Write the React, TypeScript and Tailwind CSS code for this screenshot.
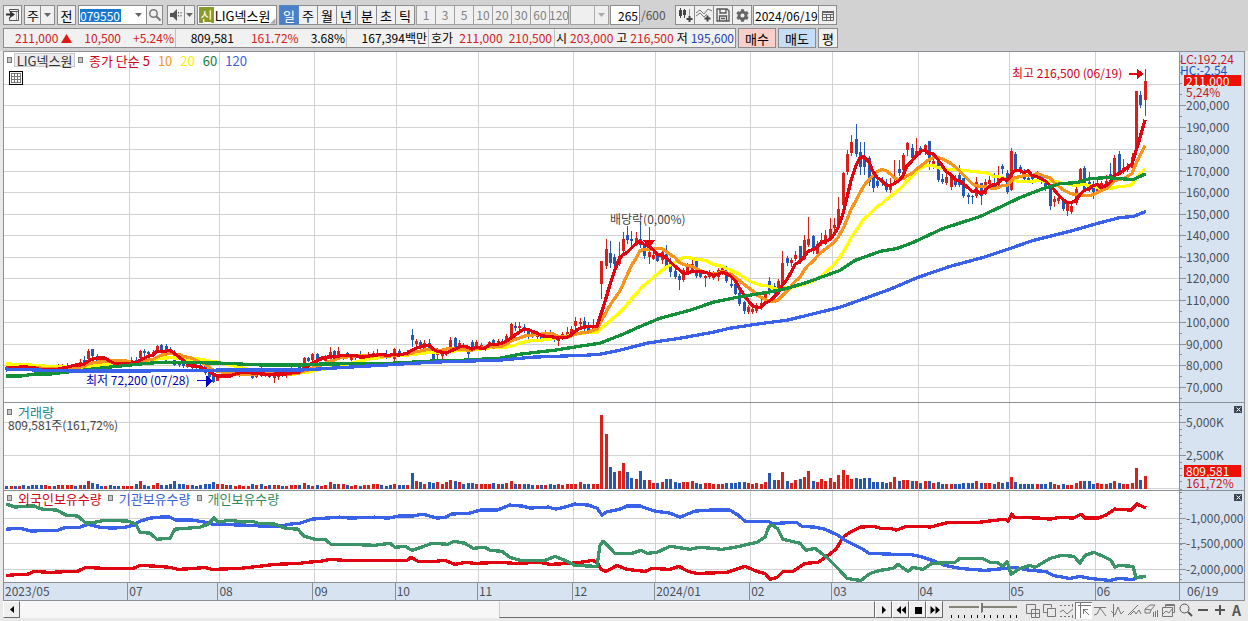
import type { ReactNode } from 'react'
import { FaCog } from 'react-icons/fa'

type Candle = [high: number, top: number, bottom: number, low: number, up: number]
type Point = [number, number]

// Plot space: x 4-1179, price 52-403, volume 404-490, holdings 491-582
const LEFT = 4
const WIDTH = 1175
const UP = '#d9201a'
const DOWN = '#2458b4'

const months = [
  { label: '2023/05', start: 4 },
  { label: '07', start: 129 },
  { label: '08', start: 219 },
  { label: '09', start: 314 },
  { label: '10', start: 396 },
  { label: '11', start: 478 },
  { label: '12', start: 573 },
  { label: '2024/01', start: 655 },
  { label: '02', start: 750 },
  { label: '03', start: 832 },
  { label: '04', start: 918 },
  { label: '05', start: 1009 },
  { label: '06', start: 1095 },
]

const candles: Candle[] = [
  [366, 368, 371, 373, 0], [364, 366, 370, 371, 1], [364, 366, 370, 371, 0], [364, 365, 369, 370, 1],
  [364, 366, 369, 370, 0], [366, 368, 369, 371, 0], [366, 368, 370, 371, 0], [366, 369, 372, 374, 0],
  [369, 370, 373, 374, 0], [369, 371, 372, 374, 1], [368, 369, 372, 373, 1], [368, 369, 370, 372, 0],
  [365, 367, 370, 372, 1], [365, 366, 368, 369, 1], [364, 366, 367, 368, 1], [365, 366, 367, 368, 1],
  [364, 366, 367, 369, 0], [360, 363, 366, 367, 1], [357, 361, 363, 365, 0], [350, 352, 360, 361, 1],
  [350, 350, 357, 359, 0], [355, 357, 362, 363, 0], [357, 361, 363, 364, 0], [360, 362, 365, 366, 1],
  [361, 362, 366, 367, 0], [360, 362, 366, 367, 0], [361, 364, 366, 368, 0], [361, 363, 365, 367, 1],
  [361, 363, 366, 367, 1], [358, 361, 365, 366, 1], [358, 361, 365, 366, 0], [351, 352, 359, 360, 1],
  [350, 352, 354, 358, 0], [352, 353, 355, 357, 0], [351, 353, 356, 357, 1], [346, 347, 352, 353, 1],
  [345, 346, 351, 352, 0], [345, 347, 352, 353, 0], [348, 350, 354, 355, 0], [351, 353, 366, 367, 0],
  [363, 364, 366, 368, 0], [362, 364, 367, 369, 0], [364, 365, 368, 369, 1], [364, 365, 369, 370, 0],
  [364, 366, 369, 371, 0], [365, 366, 371, 372, 0], [366, 367, 374, 376, 0], [369, 371, 378, 379, 0],
  [376, 377, 383, 384, 0], [376, 377, 382, 382, 1], [373, 375, 378, 379, 1], [371, 373, 378, 379, 1],
  [371, 373, 375, 377, 0], [371, 373, 376, 377, 1], [371, 373, 377, 378, 1], [371, 373, 376, 377, 1],
  [371, 373, 375, 376, 1], [371, 372, 379, 380, 0], [372, 374, 378, 379, 1], [368, 370, 375, 378, 0],
  [371, 373, 376, 378, 1], [370, 372, 378, 379, 0], [374, 376, 379, 384, 1], [371, 373, 378, 381, 1],
  [371, 373, 377, 378, 0], [370, 373, 376, 379, 1], [368, 370, 375, 376, 1], [369, 370, 375, 376, 1],
  [366, 368, 373, 375, 0], [358, 359, 367, 368, 1], [358, 359, 362, 363, 0], [354, 355, 361, 362, 1],
  [354, 355, 360, 361, 0], [358, 359, 361, 362, 1], [356, 358, 362, 363, 1], [348, 353, 360, 361, 1],
  [351, 352, 361, 362, 0], [348, 352, 358, 360, 1], [355, 357, 359, 361, 1], [353, 354, 358, 359, 0],
  [356, 358, 361, 362, 1], [356, 357, 359, 361, 1], [352, 356, 358, 360, 0], [355, 357, 359, 361, 1],
  [353, 355, 359, 360, 1], [352, 354, 358, 360, 1], [350, 354, 355, 358, 1], [354, 355, 357, 360, 0],
  [351, 355, 358, 360, 0], [355, 356, 358, 359, 0], [349, 350, 360, 362, 1], [350, 352, 355, 357, 0],
  [353, 354, 356, 357, 0], [351, 353, 356, 357, 1], [330, 336, 341, 348, 0], [340, 342, 345, 349, 1],
  [341, 343, 349, 351, 0], [341, 344, 351, 353, 1], [340, 344, 353, 355, 0], [351, 353, 360, 361, 0],
  [349, 353, 356, 360, 1], [353, 355, 357, 363, 1], [348, 350, 355, 357, 1], [338, 341, 353, 354, 1],
  [338, 339, 352, 354, 0], [341, 344, 350, 351, 1], [344, 347, 349, 351, 0], [351, 353, 355, 360, 0],
  [341, 343, 351, 352, 0], [341, 343, 351, 352, 1], [344, 346, 351, 352, 1], [346, 348, 350, 352, 1],
  [342, 343, 348, 350, 1], [340, 341, 344, 348, 0], [340, 342, 345, 347, 1], [340, 342, 345, 346, 0],
  [335, 337, 343, 344, 1], [324, 325, 337, 339, 1], [323, 327, 329, 332, 0], [323, 327, 329, 333, 1],
  [325, 328, 331, 334, 0], [329, 331, 338, 340, 0], [331, 334, 337, 339, 0], [332, 335, 338, 340, 1],
  [335, 338, 341, 342, 0], [331, 336, 340, 341, 1], [331, 334, 338, 340, 0], [336, 338, 341, 343, 0],
  [339, 341, 342, 347, 1], [333, 335, 340, 341, 1], [328, 333, 336, 338, 1], [327, 330, 334, 336, 1],
  [318, 322, 327, 330, 1], [319, 323, 325, 329, 1], [318, 322, 330, 332, 0], [323, 326, 332, 334, 0],
  [320, 326, 330, 332, 1], [322, 325, 330, 332, 1],
  [262, 262, 285, 300, 1], [240, 250, 267, 270, 1], [242, 254, 264, 269, 0], [255, 258, 265, 276, 0],
  [243, 257, 265, 267, 1], [233, 240, 252, 254, 1], [226, 236, 241, 245, 0], [232, 240, 242, 247, 0],
  [233, 239, 245, 247, 1], [222, 240, 246, 249, 0], [244, 247, 257, 260, 0], [227, 253, 258, 265, 1],
  [251, 256, 260, 261, 1], [253, 256, 262, 263, 0], [250, 253, 261, 265, 1], [246, 255, 267, 268, 0],
  [259, 262, 273, 278, 0], [270, 272, 278, 280, 0], [275, 277, 281, 291, 0], [269, 271, 281, 283, 1],
  [264, 267, 273, 275, 1], [260, 265, 271, 272, 1], [260, 261, 277, 279, 0], [271, 273, 278, 279, 0],
  [276, 277, 279, 288, 1], [271, 273, 278, 280, 1], [272, 275, 279, 281, 1], [269, 271, 278, 282, 1],
  [267, 269, 275, 276, 1], [267, 268, 282, 284, 0], [277, 285, 287, 289, 0], [283, 285, 295, 296, 0],
  [292, 294, 305, 307, 0], [302, 303, 312, 315, 0], [306, 308, 313, 315, 1], [304, 310, 313, 315, 1],
  [304, 306, 312, 314, 1], [299, 304, 308, 311, 1], [292, 294, 303, 305, 1], [278, 282, 294, 296, 0],
  [284, 287, 294, 295, 0], [280, 282, 292, 294, 1], [252, 264, 288, 290, 1], [257, 259, 264, 267, 0],
  [259, 261, 264, 268, 1], [252, 256, 260, 262, 1],
  [247, 247, 263, 265, 0], [236, 241, 260, 261, 1], [217, 240, 246, 248, 1], [236, 237, 250, 255, 0],
  [242, 245, 255, 257, 1], [234, 241, 245, 247, 1], [231, 236, 245, 246, 1], [218, 229, 240, 242, 1],
  [218, 225, 228, 233, 1], [197, 209, 225, 227, 1], [172, 173, 205, 208, 1], [150, 154, 172, 175, 1],
  [135, 142, 153, 156, 1], [124, 139, 154, 157, 0], [142, 152, 167, 175, 0], [142, 157, 167, 175, 0],
  [156, 158, 182, 186, 0], [172, 173, 188, 192, 0], [175, 181, 186, 188, 0], [177, 181, 183, 186, 0],
  [179, 183, 190, 192, 0], [178, 185, 190, 193, 1], [160, 176, 178, 181, 1], [160, 169, 173, 176, 0],
  [153, 155, 170, 172, 1], [142, 143, 150, 156, 1], [144, 148, 158, 160, 0], [138, 151, 156, 158, 1],
  [146, 148, 152, 155, 0], [144, 145, 152, 155, 1], [141, 141, 162, 170, 0], [157, 161, 166, 169, 1],
  [158, 159, 180, 182, 0], [174, 179, 182, 184, 0], [173, 177, 183, 185, 1], [174, 176, 187, 190, 1],
  [175, 178, 185, 187, 0], [165, 175, 185, 187, 0], [178, 178, 196, 198, 0], [193, 195, 197, 204, 0],
  [195, 196, 197, 204, 0], [177, 182, 196, 198, 1],
  [183, 183, 196, 205, 0], [179, 182, 194, 195, 1], [173, 180, 184, 187, 1], [173, 183, 187, 189, 0],
  [166, 176, 185, 187, 1], [164, 166, 169, 174, 0], [170, 173, 192, 194, 0], [148, 151, 190, 191, 1],
  [152, 154, 169, 171, 0], [165, 167, 172, 174, 0], [169, 171, 179, 183, 0], [176, 178, 182, 183, 0],
  [174, 177, 179, 184, 0], [171, 173, 178, 180, 1], [174, 175, 182, 184, 0], [179, 180, 189, 191, 0],
  [187, 188, 206, 210, 0], [196, 199, 202, 207, 1], [194, 198, 201, 204, 1], [199, 200, 209, 211, 0],
  [202, 203, 211, 216, 1], [204, 206, 212, 214, 1], [184, 189, 203, 205, 1], [168, 169, 184, 186, 1],
  [166, 168, 190, 192, 0], [172, 182, 190, 192, 0], [181, 184, 192, 199, 0], [178, 183, 191, 193, 1],
  [181, 183, 188, 191, 1], [175, 181, 187, 189, 1], [163, 174, 177, 182, 0], [155, 158, 177, 178, 1],
  [151, 154, 172, 175, 0], [159, 168, 172, 174, 1], [163, 167, 170, 172, 1], [153, 157, 168, 170, 1],
  [91, 91, 148, 149, 1], [91, 95, 105, 108, 0], [69, 81, 100, 116, 1],
]

const volumes = [
  1, 1, 1, 1, 2, 1, 2, 2, 2, 2, 1, 1, 2, 2, 2, 2, 1, 2, 2, 6, 4, 3, 1, 1, 2, 1, 1, 1, 1, 1, 3, 6,
  2, 1, 2, 4, 2, 2, 3, 6, 3, 3, 2, 2, 1, 2, 3, 3, 5, 3, 3, 2, 2, 1, 2, 1, 1, 3, 2, 3, 1, 2, 2, 2,
  1, 1, 2, 2, 2, 4, 2, 1, 2, 1, 2, 5, 3, 3, 3, 2, 1, 2, 1, 2, 2, 3, 3, 2, 1, 2, 3, 2, 2, 2, 14,
  6, 5, 3, 5, 4, 5, 3, 5, 7, 6, 5, 3, 4, 4, 3, 3, 3, 3, 4, 3, 3, 4, 6, 3, 3, 3, 3, 2, 2, 2, 2, 3,
  2, 3, 2, 3, 3, 3, 5, 3, 3, 3, 3, 72, 53, 20, 15, 16, 24, 15, 9, 8, 16, 7, 7, 4, 4, 5, 8, 8, 5,
  4, 5, 5, 6, 4, 3, 4, 4, 3, 3, 3, 4, 4, 4, 5, 5, 4, 3, 4, 3, 5, 14, 7, 7, 15, 6, 4, 7, 8, 10, 16,
  6, 5, 8, 6, 9, 5, 12, 17, 12, 8, 9, 8, 9, 9, 5, 5, 5, 4, 5, 10, 6, 7, 7, 6, 6, 4, 6, 6, 4, 5, 3,
  3, 3, 3, 3, 4, 4, 4, 6, 4, 4, 4, 3, 5, 4, 5, 10, 5, 3, 3, 3, 3, 3, 3, 3, 5, 3, 2, 3, 2, 2, 4, 6,
  6, 6, 3, 4, 3, 3, 4, 6, 4, 3, 3, 4, 19, 7, 11,
]

const ma60: Point[] = [
  [6, 377], [20, 377], [35, 375], [50, 375], [75, 372], [100, 369], [129, 366], [150, 364], [165, 363],
  [220, 364], [265, 366], [300, 366], [320, 365], [395, 364], [430, 362], [465, 361], [500, 359],
  [520, 355], [555, 351], [580, 347], [600, 344], [623, 335], [643, 326], [660, 319], [690, 311],
  [713, 303], [737, 298], [767, 293], [787, 289], [807, 283], [840, 271], [855, 261], [880, 252],
  [897, 249], [913, 243], [943, 229], [980, 217], [997, 209], [1020, 198], [1043, 189], [1060, 184],
  [1077, 183], [1090, 179], [1107, 178], [1120, 179], [1133, 180], [1146, 174],
]

const ma120: Point[] = [
  [6, 370], [75, 372], [130, 372], [220, 371], [300, 371], [333, 369], [367, 367], [433, 363],
  [467, 362], [500, 361], [533, 358], [587, 356], [600, 355], [620, 351], [647, 344], [680, 339],
  [713, 333], [730, 329], [763, 324], [787, 321], [840, 308], [890, 290], [918, 278], [950, 267],
  [983, 258], [1013, 248], [1033, 241], [1073, 231], [1097, 224], [1120, 218], [1133, 217], [1146, 212],
]

const foreign: Point[] = [
  [6, 575], [20, 574], [27, 574], [34, 571], [50, 572], [70, 571], [77, 571], [86, 567], [105, 568],
  [133, 568], [140, 565], [160, 566], [170, 567], [178, 569], [195, 568], [205, 567], [212, 569],
  [240, 568], [258, 566], [275, 564], [300, 563], [306, 562], [320, 561], [330, 559], [345, 560],
  [395, 560], [407, 560], [411, 557], [418, 561], [435, 561], [445, 560], [455, 564], [465, 562],
  [475, 563], [500, 562], [515, 563], [540, 562], [550, 564], [570, 563], [580, 562], [593, 560],
  [598, 563], [601, 569], [606, 571], [617, 565], [627, 569], [645, 571], [652, 568], [670, 569],
  [679, 566], [688, 571], [697, 573], [727, 572], [745, 566], [757, 571], [765, 573], [770, 579],
  [777, 577], [783, 571], [793, 571], [805, 563], [818, 562], [828, 555], [836, 549], [843, 537],
  [850, 532], [860, 527], [873, 526], [880, 528], [890, 528], [896, 530], [907, 526], [925, 526],
  [930, 527], [945, 523], [952, 522], [980, 522], [1005, 519], [1008, 521], [1012, 514], [1014, 517],
  [1040, 518], [1050, 519], [1060, 517], [1073, 518], [1081, 514], [1085, 518], [1098, 518],
  [1106, 515], [1115, 509], [1131, 510], [1137, 504], [1146, 508],
]

const institution: Point[] = [
  [6, 529], [20, 528], [32, 531], [45, 530], [58, 530], [66, 527], [80, 527], [88, 524], [100, 527],
  [112, 528], [125, 527], [134, 525], [140, 521], [150, 518], [160, 517], [170, 517], [176, 520],
  [193, 520], [205, 522], [213, 524], [245, 525], [265, 526], [280, 526], [290, 524], [300, 523],
  [312, 519], [325, 518], [340, 517], [350, 518], [375, 517], [388, 518], [398, 516], [412, 516],
  [423, 514], [437, 518], [446, 517], [451, 514], [470, 513], [480, 510], [497, 510], [510, 505],
  [522, 506], [530, 508], [548, 507], [556, 509], [565, 507], [575, 504], [588, 505], [597, 508],
  [602, 515], [606, 512], [620, 509], [627, 506], [640, 506], [655, 511], [670, 513], [680, 517],
  [695, 511], [710, 510], [730, 510], [738, 515], [745, 521], [768, 521], [773, 524], [780, 523],
  [796, 522], [802, 526], [815, 527], [825, 529], [838, 535], [845, 540], [857, 546], [863, 549],
  [869, 553], [895, 554], [910, 554], [920, 556], [935, 561], [945, 565], [960, 568], [985, 570],
  [1005, 568], [1015, 567], [1030, 570], [1046, 571], [1053, 575], [1070, 578], [1080, 576],
  [1090, 578], [1110, 580], [1118, 578], [1133, 579], [1137, 577], [1146, 576],
]

const individual: Point[] = [
  [6, 504], [15, 507], [27, 506], [34, 506], [42, 509], [57, 510], [66, 515], [78, 516], [86, 523],
  [95, 522], [105, 520], [128, 521], [136, 524], [140, 532], [150, 533], [157, 539], [170, 538],
  [175, 529], [200, 527], [208, 524], [214, 518], [218, 522], [230, 520], [243, 522], [252, 521],
  [258, 523], [275, 524], [285, 528], [298, 529], [304, 536], [315, 539], [325, 539], [331, 544],
  [345, 544], [375, 545], [390, 543], [395, 547], [405, 546], [412, 550], [424, 546], [432, 543],
  [448, 544], [454, 541], [465, 543], [473, 548], [485, 547], [490, 550], [502, 551], [510, 557],
  [520, 560], [545, 560], [555, 556], [565, 560], [575, 565], [597, 566], [600, 545], [603, 541],
  [615, 553], [632, 553], [641, 550], [647, 553], [657, 552], [670, 546], [690, 549], [700, 547],
  [722, 549], [735, 547], [757, 542], [765, 537], [769, 526], [773, 525], [778, 529], [783, 539],
  [800, 543], [806, 550], [815, 548], [828, 558], [838, 568], [847, 578], [861, 580], [870, 573],
  [880, 570], [893, 568], [898, 564], [908, 571], [913, 567], [923, 569], [932, 563], [955, 562],
  [960, 558], [982, 558], [990, 562], [997, 562], [1003, 566], [1007, 561], [1011, 574], [1020, 568],
  [1030, 565], [1035, 567], [1050, 558], [1062, 555], [1074, 556], [1080, 563], [1085, 555],
  [1094, 552], [1103, 556], [1111, 560], [1115, 567], [1119, 565], [1133, 566], [1136, 577],
  [1146, 576],
]

const priceTicks = [
  { y: 105, label: '200,000' },
  { y: 127, label: '190,000' },
  { y: 149, label: '180,000' },
  { y: 171, label: '170,000' },
  { y: 192, label: '160,000' },
  { y: 214, label: '150,000' },
  { y: 236, label: '140,000' },
  { y: 258, label: '130,000' },
  { y: 279, label: '120,000' },
  { y: 301, label: '110,000' },
  { y: 323, label: '100,000' },
  { y: 345, label: '90,000' },
  { y: 366, label: '80,000' },
  { y: 388, label: '70,000' },
]
const volumeTicks = [
  { y: 423, label: '5,000K' },
  { y: 456, label: '2,500K' },
]
const holdingTicks = [
  { y: 518, label: '-1,000,000' },
  { y: 543, label: '-1,500,000' },
  { y: 569, label: '-2,000,000' },
]

const candleX = (i: number) => Math.round(6.2 + i * 4.312)
const closeOf = (c: Candle) => (c[4] ? c[1] : c[2])

const movingAverage = (span: number, before: number): Point[] =>
  candles.map((_, i) => {
    let sum = 0
    for (let k = i - span + 1; k <= i; k++) sum += k < 0 ? before : closeOf(candles[k])
    return [candleX(i), Math.round(sum / span)]
  })

const Line = ({ points, color }: { points: Point[]; color: string }) => (
  <polyline
    points={points.map((p) => p.join(',')).join(' ')}
    fill="none"
    stroke={color}
    strokeWidth="3.3"
    strokeLinejoin="round"
  />
)

type PlotProps = {
  top: number
  height: number
  rows: number[]
  children: ReactNode
}

const Plot = ({ top, height, rows, children }: PlotProps) => (
  <svg
    className="block h-full w-full"
    viewBox={`${LEFT} ${top} ${WIDTH} ${height}`}
    preserveAspectRatio="none"
    shapeRendering="crispEdges"
  >
    {rows.map((y) => (
      <rect key={y} x={LEFT} y={y} width={WIDTH} height="1" fill="#d2d2d2" />
    ))}
    {months.slice(1).map((m) => (
      <rect key={m.label} x={m.start} y={top} width="1" height={height} fill="#d2d2d2" />
    ))}
    {children}
  </svg>
)

type AxisProps = {
  top: number
  height: number
  ticks: { y: number; label: string }[]
  minor: number
  children?: ReactNode
}

const Axis = ({ top, height, ticks, minor, children }: AxisProps) => {
  const marks: number[] = []
  for (let y = ticks[0].y; y > top; y -= minor) marks.push(y)
  for (let y = ticks[0].y + minor; y < top + height; y += minor) marks.push(y)
  return (
    <div className="relative w-[65px] shrink-0 overflow-hidden border-l border-[#8a8f96] bg-[#d8e3f1]">
      <svg
        className="block h-full w-2"
        viewBox={`0 ${top} 8 ${height}`}
        preserveAspectRatio="none"
        shapeRendering="crispEdges"
      >
        {marks.map((y) => (
          <rect key={y} x="0" y={Math.round(y)} width="2" height="1" fill="#8a8f96" />
        ))}
        {ticks.map((t) => (
          <rect key={t.y} x="0" y={t.y} width="6" height="1" fill="#8a8f96" />
        ))}
      </svg>
      {ticks.map((t) => (
        <span
          key={t.label}
          className="absolute left-[6px] -translate-y-1/2 pb-px text-xs leading-3 text-[#4a5058]"
          style={{ top: `${((t.y - top) / height) * 100}%` }}
        >
          {t.label}
        </span>
      ))}
      {children}
    </div>
  )
}

const Bullet = () => (
  <span className="h-[6px] w-[5px] shrink-0 border border-[#777] bg-[#c8c8c8]" />
)

const ClosePanel = ({ label }: { label: string }) => (
  <button
    aria-label={label}
    className="absolute top-[3px] right-[2px] flex h-[7px] w-2 items-center justify-center bg-[#3c444e]"
  >
    <svg className="h-[5px] w-[5px]" viewBox="0 0 5 5" stroke="#fff" strokeWidth="1">
      <path d="M.5 .5l4 4M4.5 .5l-4 4" />
    </svg>
  </button>
)

const Caret = ({ color = '#666' }: { color?: string }) => (
  <svg className="h-1 w-[7px]" viewBox="0 0 7 4" fill={color}>
    <path d="M0 0h7L3.500 4z" />
  </svg>
)

const toolButton =
  'flex h-5 items-center justify-center border border-[#8c8c8c] bg-[#f0f0f0] text-[13px] leading-none'

const Toolbar = () => (
  <div className="flex h-5 items-center pl-[3px] whitespace-nowrap">
    <button aria-label="창 이동" className={`${toolButton} mr-[2px] w-[19px]`}>
      <svg className="h-[14px] w-[14px]" viewBox="0 0 14 14" fill="none" stroke="#555">
        <path d="M3.500 9v3.500h9v-11h-9v2M4 3.500h9" />
        <path d="M0 6.500h4" strokeWidth="2" stroke="#333" />
        <path d="M4 3l5 3.500-5 3.500z" fill="#333" stroke="none" />
        <path d="M10.500 4v8" stroke="#aaa" />
      </svg>
    </button>
    <label className="relative mr-[2px] flex h-5 w-[31px] items-center border border-[#8c8c8c] bg-[#f0f0f0]">
      <select aria-label="종목 구분" className="h-full w-full appearance-none pl-[2px] text-[13px] leading-none outline-none">
        <option>주</option>
      </select>
      <span className="pointer-events-none absolute inset-y-0 right-0 flex w-[14px] items-center justify-center border-l border-[#8c8c8c]">
        <Caret />
      </span>
    </label>
    <button className={`${toolButton} mr-[2px] w-[19px]`}>전</button>
    <div className="mr-[4px] flex h-5 w-[85px] items-center border border-[#8c8c8c] bg-white">
      <input
        aria-label="종목코드"
        defaultValue="079550"
        className="ml-px h-[13px] w-[41px] bg-[#1878d0] text-xs leading-none text-white outline-none"
      />
      <button aria-label="종목 목록" className="ml-auto flex h-full w-4 items-center justify-center">
        <Caret />
      </button>
      <button aria-label="종목 검색" className="flex h-full w-4 items-center justify-center border-l border-[#8c8c8c] bg-[#f0f0f0]">
        <svg className="h-3 w-3" viewBox="0 0 12 12" fill="none" stroke="#777" strokeWidth="1.500">
          <circle cx="4.500" cy="4.500" r="3.700" />
          <path d="M7.200 7.200L11.500 11.500" strokeWidth="2" />
        </svg>
      </button>
    </div>
    <button aria-label="음성" className={`${toolButton} w-[18px]`}>
      <svg className="h-3 w-[14px]" viewBox="0 0 14 12">
        <path d="M1 4h3l4-4v12l-4-4h-3z" fill="#555" />
        <path d="M9.500 3v6M12 3v6" stroke="#555" strokeDasharray="1.500 1.500" />
      </svg>
    </button>
    <button aria-label="음성 설정" className={`${toolButton} mr-[2px] w-[10px] border-l-0`}>
      <Caret />
    </button>
    <div className="mr-[2px] flex h-5 w-20 items-center border border-[#8c8c8c] bg-white">
      <span className="ml-px flex h-4 w-4 items-center justify-center bg-[#8a9a2a] text-[13px] leading-none text-white">
        신
      </span>
      <span className="ml-px text-[13px] leading-none">LIG넥스원</span>
      <svg className="mt-auto ml-auto h-[6px] w-[6px]" viewBox="0 0 6 6" fill="#aaa">
        <path d="M6 0v6h-6z" />
      </svg>
    </div>
    {['일', '주', '월', '년'].map((t) => (
      <button
        key={t}
        className={
          t === '일'
            ? 'flex h-5 w-5 items-center justify-center border border-[#5a86bf] bg-[#4a7fc9] text-[13px] leading-none text-white'
            : 'flex h-5 w-[19px] items-center justify-center border border-l-0 border-[#8c8c8c] bg-[#f0f0f0] text-[13px] leading-none'
        }
      >
        {t}
      </button>
    ))}
    <div className="mr-px ml-px flex border-l border-[#8c8c8c]">
      {['분', '초', '틱'].map((t) => (
        <button key={t} className={`${toolButton} w-[19px] border-l-0`}>
          {t}
        </button>
      ))}
    </div>
    <div className="flex border-l border-[#a0a0a0]">
      {['1', '3', '5', '10', '20', '30', '60', '120'].map((t) => (
        <button
          key={t}
          className="flex h-5 w-[19px] items-center justify-center border border-l-0 border-[#a0a0a0] bg-[#f0f0f0] text-xs leading-none text-[#808080]"
        >
          {t}
        </button>
      ))}
    </div>
    <label className="relative mr-px ml-px flex h-5 w-[39px] border border-[#a0a0a0] bg-[#efefef]">
      <select aria-label="사용자 주기" disabled className="h-full w-full appearance-none">
        <option></option>
      </select>
      <span className="pointer-events-none absolute inset-y-0 right-0 flex w-[14px] items-center justify-center border-l border-[#b0b0b0]">
        <Caret color="#aaa" />
      </span>
    </label>
    <input
      aria-label="조회 개수"
      defaultValue="265"
      className="h-5 w-[30px] border border-[#8c8c8c] bg-white pr-px text-right text-xs leading-none outline-none"
    />
    <span className="w-[35px] pl-px text-xs leading-none text-[#555]">/600</span>
    <div className="mr-px flex border-l border-[#8c8c8c]">
      <button aria-label="종목 추가" className={`${toolButton} w-[19px] border-l-0`}>
        <svg className="h-4 w-4" viewBox="0 0 16 16" fill="none" stroke="#444">
          <path d="M3.500 1v10M7.500 2v9" />
          <path d="M3.500 3v6M7.500 3v5" strokeWidth="3" />
          <path d="M12.500 2v7" stroke="#999" />
          <path d="M12.500 9v6M9.500 12h6" strokeWidth="2" />
        </svg>
      </button>
      <button aria-label="지표 추가" className={`${toolButton} w-[19px] border-l-0`}>
        <svg className="h-4 w-4" viewBox="0 0 16 16" fill="none" stroke="#777">
          <path d="M0 6l4-3 4 4 4-5 4 2M0 9l4-3 4 4 3-3" />
          <path d="M11.500 8.500v6M8.500 11.500h6" strokeWidth="2" stroke="#444" />
        </svg>
      </button>
      <button aria-label="저장" className={`${toolButton} w-[19px] border-l-0`}>
        <svg className="h-[14px] w-[14px]" viewBox="0 0 14 14" fill="none" stroke="#555" strokeWidth="1.300">
          <path d="M1 1h10l2 2v10h-12z" />
          <path d="M4 1v4h6v-4M3.500 13v-5h7v5M5 10.500h4" />
        </svg>
      </button>
      <button aria-label="설정" className={`${toolButton} w-[19px] border-l-0 text-[#666]`}>
        <FaCog size={13} />
      </button>
    </div>
    <input
      aria-label="기준일"
      defaultValue="2024/06/19"
      className="h-5 w-[66px] border border-[#8c8c8c] bg-white pl-px text-xs leading-none outline-none"
    />
    <button aria-label="달력" className={`${toolButton} w-[18px] border-l-0`}>
      <svg className="h-[11px] w-3" viewBox="0 0 12 11" fill="none" stroke="#666">
        <path d="M.5 1.500h11v9h-11zM.5 4.500h11M.5 7.500h11M4.500 4v6M8.500 4v6" />
        <path d="M0 2h12" strokeWidth="2" />
      </svg>
    </button>
  </div>
)

const QuoteBar = () => (
  <div className="flex h-5 gap-[2px] pl-[3px] text-xs leading-none whitespace-nowrap">
    <div className="flex w-[733px] items-center border border-[#8c8c8c] bg-[#f1f1f1] text-[#d02020]">
      <div className="flex h-full w-[172px] items-center justify-end border-r border-[#c0c0c0] pr-px">
        <span>211,000</span>
        <svg className="mr-3 ml-[3px] h-[9px] w-[11px]" viewBox="0 0 11 9" fill="#e01818">
          <path d="M5.500 0L11 9h-11z" />
        </svg>
        <span className="mr-3">10,500</span>
        <span>+5.24%</span>
      </div>
      <div className="flex h-full w-[171px] items-center justify-end border-r border-[#c0c0c0] pr-px">
        <span className="mr-[17px] text-black">809,581</span>
        <span className="mr-3">161.72%</span>
        <span className="text-black">3.68%</span>
      </div>
      <div className="flex h-full w-[82px] items-center justify-end border-r border-[#c0c0c0] pr-px text-black">
        167,394백만
      </div>
      <div className="flex h-full w-[126px] items-center justify-between border-r border-[#c0c0c0] pr-[2px] pl-[2px]">
        <span className="text-black">호가</span>
        <span>211,000</span>
        <span>210,500</span>
      </div>
      <div className="flex h-full flex-1 items-center justify-between px-px">
        <span className="text-black">시</span>
        <span>203,000</span>
        <span className="text-black">고</span>
        <span>216,500</span>
        <span className="text-black">저</span>
        <span className="text-[#1f3fae]">195,600</span>
      </div>
    </div>
    <button className="w-[38px] border border-[#8c8c8c] bg-[#f8cfcb] text-[13px]">매수</button>
    <button className="w-[38px] border border-[#8c8c8c] bg-[#c5ddf6] text-[13px]">매도</button>
    <button className="w-5 border border-[#8c8c8c] bg-[#f0f0f0] text-[13px]">평</button>
  </div>
)

type NoteProps = { x: number; y: number; className: string; children: ReactNode }

const Note = ({ x, y, className, children }: NoteProps) => (
  <span
    className={`absolute -translate-y-1/2 text-xs leading-none whitespace-nowrap ${className}`}
    style={{ left: `${((x - LEFT) / WIDTH) * 100}%`, top: `${((y - 52) / 351) * 100}%` }}
  >
    {children}
  </span>
)

const PricePanel = () => (
  <section className="flex min-h-0 flex-[352_1_0%] border-b border-[#8a8f96]">
    <div className="relative min-w-0 flex-1">
      <Plot top={52} height={351} rows={[84, ...priceTicks.map((t) => t.y)]}>
        {candles.map(([high, top, bottom, low, up], i) => (
          <g key={i} fill={up ? UP : DOWN}>
            <rect x={candleX(i)} y={high} width="1" height={low - high} />
            <rect x={candleX(i) - 1} y={top} width="3" height={Math.max(1, bottom - top)} />
          </g>
        ))}
        <Line points={movingAverage(20, 365)} color="#ffff00" />
        <Line points={movingAverage(10, 369)} color="#f7941d" />
        <Line points={movingAverage(5, 369)} color="#e00510" />
        <Line points={ma60} color="#15903a" />
        <Line points={ma120} color="#3a62e8" />
        <path d="M643 241h12l-6 8z" fill="#e00510" />
        <path d="M1129 73h8v-4l7 5-7 5v-4h-8z" fill="#e00510" />
        <path d="M197 381h9v-5l7 6-7 6v-6h-9z" fill="#0000d0" />
      </Plot>
      <div className="absolute top-px left-[3px] flex items-center text-[13px] leading-none">
        <Bullet />
        <span className="ml-[2px] flex h-[14px] w-[61px] items-center justify-center border border-[#c8c8c8] bg-[#ececec] text-[#333]">
          LIG넥스원
        </span>
        <span className="w-[3px]" />
        <Bullet />
        <span className="ml-[6px] text-[#d00018]">종가 단순 5</span>
        <span className="ml-2 text-[#f7941d]">10</span>
        <span className="ml-2 text-[#f5f000]">20</span>
        <span className="ml-2 text-[#15803a]">60</span>
        <span className="ml-2 text-[#3a5fd8]">120</span>
      </div>
      <button aria-label="데이터 표" className="absolute top-[19px] left-[5px] flex h-[14px] w-[14px] items-center justify-center border border-black bg-white">
        <svg className="h-[10px] w-[10px]" viewBox="0 0 10 10" fill="none" stroke="#777" shapeRendering="crispEdges">
          <path d="M.5 .5h9v9h-9zM.5 3.500h9M.5 6.500h9M3.500 .5v9M6.500 .5v9" />
        </svg>
      </button>
      <Note x={1012} y={73} className="text-[#d00018]">최고 216,500 (06/19)</Note>
      <Note x={86} y={381} className="text-[#0000b0]">최저 72,200 (07/28)</Note>
      <Note x={610} y={219} className="text-[#444]">배당락(0,00%)</Note>
    </div>
    <Axis top={52} height={351} ticks={priceTicks} minor={10.89}>
      <div className="absolute top-px left-0 w-full text-xs leading-[11px]">
        <p className="text-[#c81820]">LC:192,24</p>
        <p className="text-[#2050c0]">HC:-2,54</p>
        <p className="ml-[4px] w-[57px] bg-[#ee1000] pl-[2px] text-white">211,000</p>
        <p className="pl-[6px] text-[#c81820]">5,24%</p>
      </div>
    </Axis>
  </section>
)

const VolumePanel = () => (
  <section className="flex min-h-0 flex-[87_1_0%] border-b border-[#8a8f96]">
    <div className="relative min-w-0 flex-1">
      <Plot top={404} height={86} rows={[423, 456, 488]}>
        {volumes.map((v, i) => (
          <rect
            key={i}
            x={candleX(i) - 1}
            y={488 - v}
            width="3"
            height={v + 1}
            fill={candles[i][4] ? UP : DOWN}
          />
        ))}
      </Plot>
      <div className="absolute top-[2px] left-[3px] leading-[13px]">
        <p className="flex items-center gap-[6px] text-[13px] text-[#20808c]">
          <Bullet />
          거래량
        </p>
        <p className="pl-px text-xs leading-[13px] text-[#444]">809,581주(161,72%)</p>
      </div>
    </div>
    <Axis top={404} height={86} ticks={volumeTicks} minor={6.6}>
      <ClosePanel label="거래량 닫기" />
      <div className="absolute bottom-px left-[4px] w-[57px] text-xs leading-3">
        <p className="bg-[#ee1000] pl-[2px] text-white">809,581</p>
        <p className="pl-[2px] text-[#c81820]">161,72%</p>
      </div>
    </Axis>
  </section>
)

const HoldingsPanel = () => (
  <section className="flex min-h-0 flex-[92_1_0%] border-b border-[#8a8f96]">
    <div className="relative min-w-0 flex-1">
      <Plot top={491} height={91} rows={holdingTicks.map((t) => t.y)}>
        <Line points={foreign} color="#e00510" />
        <Line points={institution} color="#3a62e8" />
        <Line points={individual} color="#3a9468" />
      </Plot>
      <div className="absolute top-px left-[3px] flex items-center gap-[6px] text-[13px] leading-[13px]">
        <Bullet />
        <span className="text-[#d00018]">외국인보유수량</span>
        <Bullet />
        <span className="text-[#3a62d8]">기관보유수량</span>
        <Bullet />
        <span className="text-[#2f8a5c]">개인보유수량</span>
      </div>
    </div>
    <Axis top={491} height={91} ticks={holdingTicks} minor={5.1}>
      <ClosePanel label="보유수량 닫기" />
    </Axis>
  </section>
)

const DateAxis = () => (
  <div className="flex h-[18px] shrink-0 border-b border-[#8a8f96] bg-[#d8e3f1] text-xs leading-4 text-[#4a5058]">
    <div className="flex min-w-0 flex-1">
      {months.map((m, i) => (
        <span
          key={m.label}
          className={i === 0 ? 'basis-0 pl-px' : 'basis-0 border-l border-[#8a8f96] pl-px'}
          style={{ flexGrow: (months[i + 1]?.start ?? LEFT + WIDTH) - m.start }}
        >
          {m.label}
        </span>
      ))}
    </div>
    <span className="w-[65px] border-l border-[#8a8f96] pl-[7px]">06/19</span>
  </div>
)

const scrollButton =
  'flex h-[17px] w-[17px] items-center justify-center border border-t-white border-l-white border-r-[#6a6a6a] border-b-[#6a6a6a] bg-[#efefef]'

const playback = [
  { label: '재생', path: 'M5 3v8l4-4z' },
  { label: '뒤로', path: 'M7 3v8l-4.500-4zM12 3v8l-4.500-4z' },
  { label: '정지', path: 'M4 4h7v7h-7z' },
  { label: '앞으로', path: 'M2.500 3v8l4.500-4zM7.500 3v8l4.500-4z' },
]

const drawTools = [
  { label: '창 추가', path: 'M7 10.500h-5.500v-9h9v5M6.500 6.500h8v8h-8zM10.500 6.500v8M6.500 10.500h8' },
  { label: '창 겹치기', path: 'M5 9.500h-3.500v-8h8v3M5.500 5.500h8v8h-8z' },
  { label: '범위', path: 'M1 2.500h2M5 2.500h2M9 2.500h2M1 13.500h2M5 13.500h2M9 13.500h2M1 9l3-2 4 4 6-5M13.500 1v3M13.500 12v3' },
  { label: '십자선', path: 'M1 2.500h13M3.500 0v15M6 6l6 6M6.500 11v-4.500h4.500', active: true },
  { label: '추세선', path: 'M1 4.500h12M1 12l3-1 3-6 3 4 3 4' },
  { label: '수직선', path: 'M3.500 1v13M1 8l4 4 3-8 3 7 3-3' },
  { label: '빗각', path: 'M1 12L11 2M3 12l4-4 2 3 3-4 2 4' },
  { label: '지우개', path: 'M1 6l5-4h5l-4 5zM1 6v4h5l1-3M9.500 9v5M11.500 8v6M13.500 7v7' },
  { label: '차트 복사', path: 'M4.500 4v-2.500h9v8h-2M1.500 4.500h10v9h-10zM4 2.500h9M2 11l3-3 3 2 3-4' },
]

const ScrollBar = () => (
  <div className="flex h-5 shrink-0 items-start px-[3px]">
    <button aria-label="왼쪽으로" className={scrollButton}>
      <svg className="h-[7px] w-1" viewBox="0 0 4 7">
        <path d="M4 0v7l-4-3.500z" />
      </svg>
    </button>
    <div className="flex h-[17px] flex-1 justify-end bg-[#f7f7f7]">
      <div className="h-full w-[44%] border border-t-white border-r-[#6a6a6a] border-b-[#6a6a6a] border-l-[#ccc] bg-[#efefef]" />
    </div>
    {playback.map((b) => (
      <button key={b.label} aria-label={b.label} className={scrollButton}>
        <svg className="h-[14px] w-[14px]" viewBox="0 0 14 14">
          <path d={b.path} />
        </svg>
      </button>
    ))}
    <label className="relative mx-[6px] block h-[17px] w-[69px]">
      <input type="range" aria-label="속도" defaultValue="48" className="absolute inset-0 h-full w-full opacity-0" />
      <svg className="block h-full w-full" viewBox="0 0 69 17" shapeRendering="crispEdges">
        <path d="M0 5h68v2h-68z" fill="#85857a" />
        <path d="M30 2h3v9h-3z" fill="#efefef" />
        <path d="M32 2h2v8l-2 2v-1z" fill="#777" />
        {Array.from({ length: 11 }, (_, i) => (
          <rect key={i} x={2 + i * 6.5} y="14" width="1" height="3" fill="#111" />
        ))}
      </svg>
    </label>
    <div className="flex h-[18px] w-[221px] items-center justify-between">
      {drawTools.map((t) => (
        <button
          key={t.label}
          aria-label={t.label}
          className={
            t.active
              ? 'flex h-[17px] w-[17px] items-center justify-center border-t border-l border-[#777] bg-white'
              : 'flex h-[17px] w-[17px] items-center justify-center'
          }
        >
          <svg className="h-[15px] w-[15px]" viewBox="0 0 15 15" fill="none" stroke="#777">
            <path d={t.path} />
          </svg>
        </button>
      ))}
      <button aria-label="돋보기" className="flex w-[17px] justify-center">
        <svg className="h-[14px] w-[14px]" viewBox="0 0 14 14" fill="none" stroke="#555">
          <circle cx="5.500" cy="5.500" r="4.500" />
          <path d="M9 9l4 4" strokeWidth="2" />
        </svg>
      </button>
      <button aria-label="축소" className="flex w-[17px] justify-center">
        <svg className="h-[10px] w-[10px]" viewBox="0 0 10 10" fill="#555">
          <path d="M0 4h10v2h-10z" />
        </svg>
      </button>
      <button aria-label="확대" className="flex w-[17px] justify-center">
        <svg className="h-[10px] w-[10px]" viewBox="0 0 10 10" fill="#555">
          <path d="M0 4h4v-4h2v4h4v2h-4v4h-2v-4h-4z" />
        </svg>
      </button>
      <button className="w-[17px] text-[14px] leading-none font-bold text-[#555]">A</button>
    </div>
  </div>
)

const App = () => {
  return (
    <main className="flex h-screen min-h-[480px] flex-col bg-[#e9e9e9] font-['Noto_Sans_CJK_KR',sans-serif] text-black">
      <header className="flex h-[51px] shrink-0 flex-col gap-[3px] overflow-hidden bg-[#d2d2d2] pt-[5px]">
        <Toolbar />
        <QuoteBar />
      </header>
      <div className="mx-[3px] flex min-h-0 flex-1 flex-col border-t border-r border-l border-[#8a8f96] bg-white">
        <PricePanel />
        <VolumePanel />
        <HoldingsPanel />
        <DateAxis />
      </div>
      <ScrollBar />
    </main>
  )
}

export default App
